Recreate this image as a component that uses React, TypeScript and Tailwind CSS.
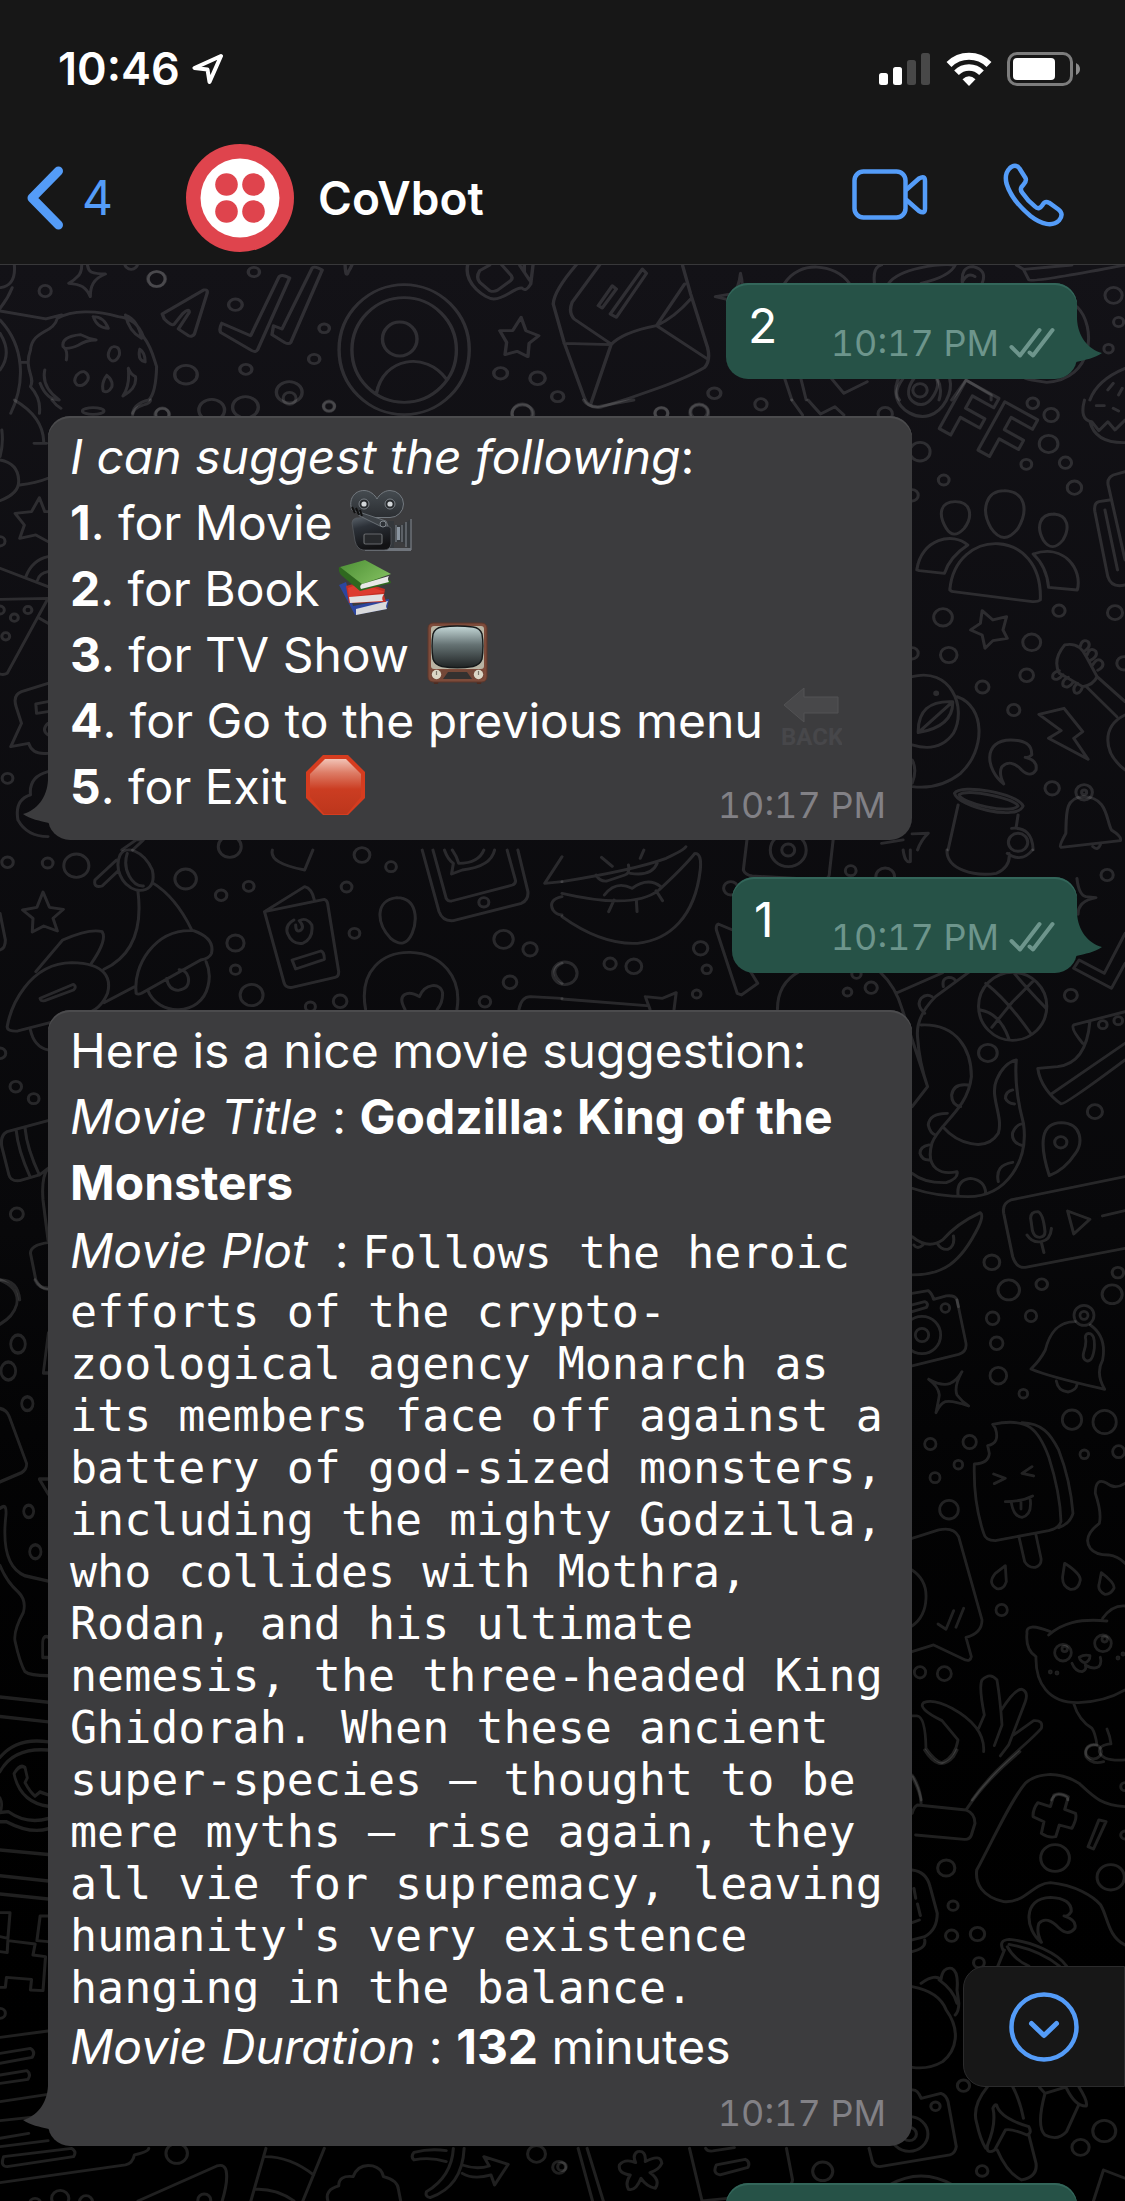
import type { ReactNode } from "react";

type Tile = { at: string; lines: string; dots: string };

/* Chat wallpaper: each tile is a patch of line-art doodles plus "x y r" bubbles. */
const TILES: Tile[] = [
  {
    at: "scale(.3584 .3333)",
    lines:
      "M40 795 q5 60 -38 68 M0 925 q22 -30 34 -62 M0 933 L128 957 L172 945 M228 795 q0 25 -12 35 q-10 12 -24 20 q25 2 38 10 q14 10 22 30 q0 -25 8 -40 q10 -18 34 -28 q-25 0 -40 -6 q-8 -6 -10 -21 M160 955 C200 930 270 930 330 950 C370 955 390 980 400 1010 C425 1045 430 1080 437 1100 Q435 1180 415 1200 Q375 1210 370 1240 M160 955 C150 1000 90 990 85 1050 C65 1110 100 1130 85 1160 Q115 1195 110 1240 M260 950 q30 0 42 35 q-30 0 -42 -35 M350 945 q35 15 45 70 q-35 -20 -45 -70 M185 1080 Q190 1050 176 1040 Q170 1010 225 1004 Q245 1015 268 1020 Q240 1020 220 1035 Q200 1045 185 1045 M318 1040 q18 0 15 25 q-8 20 -20 18 q-14 -8 -10 -25 q5 -18 15 -18 M390 1048 q15 10 15 38 q-22 -5 -15 -38 M235 1115 q15 8 10 25 q-12 22 -30 15 q-12 -10 -2 -28 q10 -14 22 -12 M298 1126 q18 15 14 35 q-10 20 -24 12 q-6 -25 10 -47 M358 1105 q8 20 20 25 q5 35 -35 58 q20 -30 15 -83 M125 1110 Q115 1160 165 1200 Q130 1200 112 1150 M0 960 C70 1040 70 1150 30 1240 M0 1000 q35 60 0 110 M55 1087 h22",
    dots: "126 873 17;366 790 18;437 837 23",
  },
  {
    at: "translate(100 264) scale(.4018 .3333)",
    lines:
      "M155 150 L258 78 Q270 75 266 90 L235 210 Q230 220 220 215 L195 195 L222 145 Q222 130 205 150 L185 180 Q178 188 160 165 Z M303 178 L375 215 L445 40 Q450 28 472 42 L392 258 Q388 266 378 260 L300 205 Q296 195 303 178 M432 185 L453 195 L528 12 Q535 5 553 18 L475 235 Q470 242 460 236 L428 212 Z M595 257 a162 195 0 1 0 324 0 a162 195 0 1 0 -324 0 M627 258 a130 157 0 1 0 260 0 a130 157 0 1 0 -260 0 M703 225 a43 51 0 1 0 86 0 a43 51 0 1 0 -86 0 M688 388 C705 280 810 260 862 345 M610 5 q2 40 8 18 q5 -8 10 -23 M915 3 C905 60 960 105 980 105 C1010 105 1030 70 1050 72 Q1060 85 1072 60 L1078 0 M970 3 L945 20 Q935 40 945 55 L970 80 Q980 85 990 78 L1022 50 Q1030 40 1020 30 L1000 3 M1045 5 L1070 50 M1056 3 V25 M1048 160 L1060 200 L1092 215 L1068 238 L1065 278 L1038 262 L1008 272 L1012 235 L995 200 L1027 200 Z M1185 3 Q1130 80 1128 120 L1155 235 L1205 400 Q1215 435 1245 430 C1330 400 1450 350 1505 310 Q1520 290 1512 250 L1470 90 L1450 5 M1155 238 L1272 242 L1220 425 M1272 242 Q1300 205 1385 185 L1512 285 M1385 185 L1455 60 M1470 105 Q1430 160 1385 185 M1245 0 L1175 115 Q1165 145 1180 165 L1272 240 M1275 65 L1285 75 L1250 132 L1240 125 Z M1350 15 L1360 28 L1285 160 L1270 150 Z",
    dots: "141 45 22;383 24 14;337 122 17;214 332 28;363 316 15;558 193 13;533 285 14;471 385 32;570 427 13;278 438 32;362 430 32;155 452 18;997 328 17;1089 343 19;1139 398 15;1529 388 16;1491 444 21;1397 448 16;1052 450 27",
  },
  {
    at: "translate(562 0) scale(.3591 .3333)",
    lines:
      "M620 850 C660 780 760 790 800 850 M870 850 Q865 800 890 795 M910 850 C940 805 1050 790 1095 795 Q1080 830 1000 850 M1115 850 q-5 -50 30 -50 q40 10 25 50 M1115 845 q15 -30 35 -15 M1265 795 L1285 808 L1300 840 Q1310 848 1568 795 M1285 808 L1420 795 M497 820 q-5 50 -25 62 l-45 8 l38 10 M497 820 q5 20 5 35 M1434 920 C1490 980 1480 1140 1350 1147 Q1300 1140 1290 1135 M620 1135 L640 1200 M665 1135 L680 1200 M750 1135 L785 1180 L850 1145 M950 1135 Q920 1180 940 1200 M1045 1135 q15 30 5 65 M1085 1200 L1125 1140 L1195 1185 V1200 M1568 1105 Q1490 1140 1470 1200 M1520 1170 l15 -20 M1550 1185 l10 -20",
    dots: "1536 886 24;1550 966 14;1522 1046 13;997 1171 20",
  },
  {
    at: "translate(0 400) scale(.3584 .3333)",
    lines:
      "M40 0 Q120 50 122 125 M95 130 H130 M0 180 Q50 190 52 240 Q55 280 0 302 M55 255 Q100 250 134 235 M5 90 Q10 130 0 170 M134 335 L125 335 L110 293 L88 335 L42 340 L68 375 L55 415 L100 405 L134 425 M72 530 Q90 480 134 470 M105 540 q5 -20 29 -25 M0 505 L134 560 M0 598 L134 595 L20 820 Q10 826 0 822 M110 655 l24 15 M134 850 L60 875 Q35 885 45 920 L60 970 L30 1040 L80 1030 Q90 1065 134 1060 M134 905 L100 912 L102 940 L134 935 M134 970 q-20 20 0 35 M134 1115 Q80 1130 85 1185 Q40 1200 50 1260 Q75 1310 134 1310 M145 0 q10 15 25 25 M370 45 Q370 25 400 15 Q420 10 420 0 M230 33 a30 10 0 1 0 60 0 a30 10 0 1 0 -60 0 M340 1350 L380 1320 L400 1320 L370 1350",
    dots: "0 424 14;0 630 12;78 630 11;40 653 11;16 709 11;21 1135 15;808 -5 18;918 19 16;453 42 18;1457 40 28",
  },
  {
    at: "translate(562 400) scale(.3591 .3333)",
    lines:
      "M60 0 Q70 20 100 20 L200 0 M640 0 L670 45 M685 0 L720 42 L760 20 L785 45 M1095 305 C1140 305 1145 350 1120 385 Q1090 420 1070 385 C1045 340 1055 305 1095 305 M1233 272 C1290 275 1300 330 1270 385 Q1230 440 1195 385 C1165 330 1180 272 1233 272 M1370 342 C1410 345 1415 385 1395 420 Q1365 460 1340 420 C1320 380 1330 342 1370 342 M1080 570 C1095 380 1340 380 1332 600 Q1325 606 1310 605 L1090 575 Q1080 575 1080 565 M988 510 C1000 415 1090 395 1130 435 Q1080 470 1065 520 L995 512 Z M1312 462 C1400 430 1450 510 1435 570 L1355 562 Q1350 500 1312 462 M1455 0 Q1440 60 1475 65 L1495 92 L1520 65 L1540 90 L1568 60 M1470 65 Q1485 130 1568 128 M1488 17 h22 M1535 25 l15 8 M1568 215 L1535 225 Q1515 235 1522 260 L1568 480 M1525 300 L1495 305 Q1480 310 1484 335 L1520 530 Q1530 565 1568 555 M1512 330 L1547 510 M1170 632 L1200 660 L1238 650 L1228 690 L1240 715 L1200 722 L1178 745 L1170 705 L1138 690 L1165 670 Z M1400 735 Q1440 725 1460 770 L1490 830 Q1480 855 1450 860 L1385 820 Q1365 780 1400 735 M1490 830 L1568 905 M1460 860 L1545 950 M1568 945 Q1520 970 1520 1020 Q1520 1070 1568 1110 M1443 740 q5 -25 22 -15 q10 15 -12 30 M1462 765 q8 -25 24 -12 q8 15 -14 28 M1478 795 q12 -25 26 -10 q8 15 -12 26 M1385 812 q-22 5 -18 22 q12 12 28 -10 M1410 832 q-20 10 -14 26 q14 10 28 -12 M1436 850 q-16 12 -8 28 q14 8 22 -18 M1328 943 L1398 925 L1450 995 L1425 1015 L1465 1078 L1355 1015 L1390 992 Z M975 830 C1080 800 1130 920 1090 1000 Q1050 1060 975 1035 M1100 890 C1180 920 1180 1050 1110 1120 Q1050 1170 975 1160 M992 998 Q990 900 1088 905 Q1090 980 992 998 L1085 908 M975 1080 q15 30 0 70 M1230 1152 C1180 1110 1170 1020 1250 1020 Q1310 1020 1308 1065 Q1300 1075 1290 1072 Q1325 1080 1320 1110 Q1305 1135 1280 1110 Q1250 1075 1225 1100 Q1215 1120 1230 1152 M1093 1180 C1110 1150 1270 1180 1284 1218 C1270 1265 1100 1220 1093 1180 M1106 1184 C1130 1165 1260 1195 1270 1218 C1250 1245 1110 1210 1106 1184 M1103 1215 L1075 1350 M1270 1245 L1265 1280 M1252 1285 Q1310 1280 1312 1350 M1388 1340 Q1385 1335 1403 1300 C1405 1240 1400 1195 1450 1190 C1520 1190 1515 1260 1530 1290 Q1560 1310 1555 1322 L1390 1342 M1478 1340 q15 15 22 -8 M890 1330 L950 1320 M975 1302 L1020 1300 Q1000 1320 990 1350",
    dots: "277 40 18;382 38 26;554 13 17;900 42 20;997 155 28;1293 193 15;1355 132 26;1402 188 17;1362 45 20;1311 10 16;1063 240 15;975 286 17;1427 263 20;1061 652 26;1384 632 17;1540 638 21;1308 727 25;1077 765 23;975 760 17;1294 826 19;1171 861 18;1258 930 17;1365 1165 20;1565 790 20;1270 1327 27;1454 1177 23;1454 1177 7;1042 880 4",
  },
  {
    at: "translate(0 850) scale(.3584 .3333)",
    lines:
      "M120 126 L138 172 L177 178 L148 205 L160 243 L122 228 L90 246 L92 205 L63 180 L103 172 Z M335 15 C350 -15 400 0 425 60 C435 110 410 125 380 120 C335 105 320 50 335 15 M355 10 C340 60 370 110 400 108 M325 30 L265 90 Q260 115 285 108 L330 62 M385 125 Q405 300 290 358 M425 98 Q490 140 535 240 M380 430 C370 350 430 235 540 242 Q600 265 590 310 Q585 325 560 330 L395 430 Q385 435 380 430 M412 420 C440 500 560 500 580 410 Q590 370 575 335 M465 385 q5 35 32 36 q35 -5 28 -40 q-5 -20 -25 -22 M100 365 L175 270 Q250 235 285 245 Q300 270 255 340 M20 530 C30 470 80 340 200 338 C300 340 310 390 300 430 Q280 480 240 490 L50 543 Q20 545 20 530 M112 445 L205 403 Q215 410 205 420 L125 452 Q112 455 112 445 M290 458 L375 410 M85 540 Q95 590 134 600 M738 185 L850 110 Q870 115 877 150 M738 185 L905 148 Q912 150 914 160 L945 365 Q945 380 935 382 L815 412 Q798 415 793 400 Z M820 210 Q795 225 802 250 Q815 285 845 280 Q875 265 870 225 Q855 200 835 212 Q850 230 840 240 Q825 250 825 225 M815 330 L895 303 Q905 305 905 328 L825 357 Z M760 0 Q750 40 850 60 L873 0 M1108 143 C1165 145 1165 210 1150 250 Q1130 300 1090 265 C1050 220 1045 150 1108 143 M1020 478 C1000 360 1070 305 1145 307 C1230 310 1290 380 1275 478 M1130 478 C1105 430 1140 420 1170 440 C1185 400 1230 395 1235 430 Q1235 460 1220 478 M1178 0 L1225 185 Q1235 215 1265 212 L1455 160 Q1475 150 1473 125 L1445 0 M1208 0 L1245 145 Q1250 155 1260 153 L1430 105 Q1440 100 1438 90 L1415 0 M1240 0 Q1250 30 1265 40 L1260 72 L1290 60 Q1370 50 1380 0 M1262 0 Q1275 20 1280 40 Q1335 40 1350 0 M1568 20 L1520 100 L1568 95 M1568 140 q-40 10 -25 40 q10 15 25 15 M1568 340 q-40 20 0 60 M1448 478 Q1455 440 1480 440 L1568 445 M134 812 L20 845 Q0 855 5 890 L25 975 Q30 995 55 992 L110 975 L134 955 M45 840 q5 60 38 138 M70 835 q5 60 40 140 M134 955 Q115 980 120 1050 L134 1170 M134 1178 Q85 1185 85 1210 L100 1290 Q115 1320 134 1318 M0 1290 Q50 1290 55 1350 M0 190 L15 270 Q15 295 0 300",
    dots: "21 37 16;133 39 15;213 47 35;518 87 30;617 136 16;694 109 15;641 -10 32;1010 15 22;1091 50 15;967 111 15;989 250 15;657 279 24;657 359 14;702 435 32;949 454 19;866 470 14;1405 268 27;1479 298 20;1423 397 19;1353 455 16;44 710 16;94 746 15;47 1092 18;0 610 16;1350 157 14",
  },
  {
    at: "translate(562 850) scale(.3591 .3333)",
    lines:
      "M0 95 Q200 60 290 25 Q340 0 345 -10 M0 130 Q200 180 270 120 Q340 50 370 10 Q390 10 385 60 C370 200 300 270 210 280 Q110 285 0 200 M95 75 Q105 95 125 93 L175 75 Q190 70 185 45 M190 70 q60 10 75 -30 M110 22 l30 27 M228 0 l-10 25 M118 135 Q150 90 195 115 Q240 80 275 110 M145 150 l-15 35 M207 150 l2 35 M262 122 l18 30 M515 -30 L505 60 Q510 75 530 78 L655 85 M755 -30 L745 65 Q745 85 735 85 M950 0 q5 40 20 35 l0 -35 M1072 0 C1070 60 1150 80 1210 70 Q1250 50 1245 10 M1240 10 Q1280 40 1310 0 M1434 85 q5 50 25 55 l28 3 q-50 10 -50 50 M475 240 L435 222 Q428 225 430 240 L488 430 L500 435 L545 400 L525 365 M232 440 L280 445 L318 428 L312 478 M0 447 L235 467 M232 440 L245 478 M600 478 Q600 400 660 365 M885 365 Q930 410 948 480 M930 430 L1060 368 M1135 365 L1040 440 Q985 500 990 560 Q995 640 1018 710 L975 770 M1000 525 C1100 520 1140 600 1140 680 C1130 780 1050 820 1030 880 C1010 960 1060 975 1100 965 Q1105 985 1070 998 Q1010 1000 975 970 M948 480 L1018 710 M1060 830 C1100 880 1180 910 1215 850 C1230 800 1190 740 1210 690 Q1230 640 1265 630 C1260 700 1270 760 1285 820 C1300 930 1240 1040 1130 1040 Q1040 1040 975 1015 M1130 705 q-40 -5 -45 30 q0 30 25 35 M1073 790 q-50 0 -53 35 q5 25 20 30 M1022 885 q-25 5 -25 25 q5 20 25 20 M1103 1035 q-5 -45 35 -50 q40 5 42 45 M1215 995 q-10 -50 40 -58 M1285 888 q-35 -10 -30 -40 q10 -25 28 -27 M1255 720 q-20 5 -20 25 q5 15 25 17 M1010 490 q-25 -25 -10 -45 q15 -15 30 -5 M1062 410 q-5 -25 15 -28 q15 0 20 12 M1160 469 a95 102 0 1 0 190 0 a95 102 0 1 0 -190 0 M1180 400 Q1240 450 1305 550 M1258 368 Q1290 410 1348 475 M1197 532 L1255 455 L1315 390 M1165 480 Q1220 490 1245 568 M1568 250 L1510 370 L1440 330 L1425 355 L1530 415 L1568 340 M1568 485 L1425 525 Q1415 535 1450 580 M1470 515 Q1460 640 1380 650 L1325 655 C1330 700 1360 740 1390 762 Q1400 765 1568 630 M1365 730 L1568 580 M1357 977 Q1310 820 1390 818 C1450 820 1450 880 1430 910 Q1400 960 1357 977 M1568 980 L1250 1050 Q1225 1060 1230 1090 L1255 1220 Q1265 1255 1290 1252 L1568 1195 M1305 1105 q0 -20 20 -20 q15 5 20 60 q0 15 -15 17 q-15 0 -20 -20 Z M1295 1155 Q1310 1180 1335 1175 Q1360 1170 1363 1135 M1335 1178 L1342 1208 M1408 1083 L1470 1108 L1425 1152 Z M1505 1098 L1568 1082 M975 1160 Q1020 1200 1060 1170 Q1100 1120 1165 1088 Q1175 1095 1160 1130 C1110 1240 1060 1275 975 1275 M1045 1180 q10 20 30 18 q20 -10 15 -40 M980 1185 q10 15 25 0 M975 1330 L1020 1322 Q1030 1330 1035 1348 L1070 1338 Q1095 1335 1100 1350 L1104 1370 M975 1365 L1010 1355 Q1022 1360 1015 1372 L975 1385",
    dots: "630 0 50;630 0 18;804 62 15;470 115 20;900 80 26;1518 75 17;386 295 20;8 370 34;134 341 17;200 349 22;403 358 13;375 432 12;820 372 13;795 426 12;861 413 17;1417 436 18;1186 609 26;1484 785 21;1197 1237 22;1244 1320 30;1336 1303 16;1548 1268 16;1532 1333 28;1506 524 12;1549 512 12;1389 877 17",
  },
  {
    at: "translate(862 1300) scale(.3333)",
    lines:
      "M285 0 L312 130 Q315 155 290 163 L150 198 M200 238 Q240 260 265 250 Q285 240 300 215 Q275 260 285 285 Q300 305 320 318 Q270 300 250 305 Q235 310 222 338 Q230 300 232 285 Q230 260 200 238 M640 65 C580 65 560 110 550 150 Q535 180 507 207 C560 230 650 250 728 268 Q700 220 722 180 Q735 110 685 75 M583 243 q5 30 35 33 q25 -5 27 -22 M680 100 q20 0 17 45 q-5 40 -22 38 q-15 -5 -10 -25 q10 -30 5 -45 q0 -12 10 -13 M392 373 C500 350 530 390 560 470 Q595 580 597 665 Q590 685 560 692 L400 722 Q370 722 365 700 C345 640 335 560 337 492 Q380 490 382 460 L377 437 Q415 430 400 385 Z M480 368 C540 370 565 400 590 450 Q625 540 633 640 Q625 670 590 683 M395 522 l35 13 l-33 16 M510 500 l-30 20 l35 8 M430 605 Q480 605 512 588 M448 608 Q455 650 480 652 Q510 645 505 600 M477 605 v22 M472 715 L488 785 Q500 805 520 802 Q540 795 537 775 L522 705 M430 797 L433 845 Q425 870 405 866 Q375 850 400 820 Z M608 790 Q655 820 655 840 Q650 870 625 868 Q600 860 602 830 Z M718 818 Q760 850 756 865 Q745 885 728 883 Q705 870 712 850 Z M789 550 Q760 570 735 550 Q700 530 700 580 Q720 640 712 670 Q660 710 685 745 Q700 765 740 765 Q770 770 789 790 M150 715 L230 690 Q275 680 290 710 L360 960 Q360 1000 312 1012 L328 1070 Q325 1085 310 1080 L215 1035 L150 1055 M150 810 Q195 840 192 895 Q190 950 150 978 M228 972 L252 988 L275 932 M282 982 L305 925 M560 1005 C600 970 650 955 735 963 M565 995 Q490 965 495 1000 Q490 1050 522 1070 C520 1150 560 1210 650 1208 Q730 1205 789 1170 M722 955 Q750 915 789 918 M652 1072 q15 -10 32 -5 q0 15 -15 22 q-15 -5 -17 -17 M630 1090 q10 25 30 25 q15 -5 10 -20 q25 15 40 5 q10 -10 5 -28 M635 1210 Q650 1260 690 1285 Q700 1300 705 1335 Q665 1335 672 1370 Q690 1395 725 1385 M735 1287 Q745 1310 747 1332 Q710 1335 712 1355 Q720 1385 789 1380 M365 1355 Q370 1280 270 1225 Q215 1195 185 1208 Q165 1225 240 1262 L288 1320 Q280 1370 240 1388 Q220 1385 192 1345 Q190 1250 165 1248 L150 1248 M350 1285 L367 1245 Q350 1160 360 1140 Q385 1115 405 1140 Q415 1200 420 1275 L397 1337 M418 1230 Q460 1165 480 1168 Q500 1175 490 1205 L440 1335 L415 1368 M455 1305 L515 1262 Q545 1260 538 1285 C500 1330 400 1400 330 1500 M150 1425 Q170 1450 178 1500 M568 1500 q10 -20 30 -15 q20 5 20 15",
    dots: "180 105 56;180 105 20;250 24 13;392 55 19;507 48 17;404 130 19;409 227 25;484 281 13;205 432 17;323 426 20;289 494 13;219 533 15;630 359 29;728 366 35;667 463 13;770 455 18;261 629 28;419 930 17;174 1117 17;247 1121 21;666 46 30;666 46 12;603 1058 25;608 1047 8;723 1030 25;728 1018 8;565 1116 3;585 1119 3;768 1074 3;783 1062 3",
  },
  {
    at: "translate(562 1750) scale(.3591 .3333)",
    lines:
      "M1275 5 Q1180 90 1125 180 M1010 0 Q1050 70 1090 20 L1100 0 M990 165 L1125 180 Q1150 190 1150 220 L1140 255 Q1135 270 1120 268 L985 255 M975 190 q5 -20 15 -25 M975 80 Q1000 130 1000 160 M1568 170 C1500 165 1480 140 1440 100 C1380 60 1320 70 1290 100 C1250 150 1200 270 1155 360 C1150 400 1170 440 1230 455 C1290 460 1310 400 1360 398 C1430 405 1480 440 1500 465 C1520 500 1520 560 1568 585 M1370 135 Q1385 125 1410 140 L1400 178 L1430 190 Q1435 205 1420 235 L1385 225 L1375 260 Q1355 265 1335 250 L1342 215 L1312 200 Q1310 180 1325 158 L1360 170 Z M1495 210 L1515 215 L1480 297 L1465 290 Z M1335 577 C1290 540 1280 445 1360 442 Q1420 445 1418 485 Q1410 500 1398 498 Q1435 510 1428 535 Q1410 560 1385 535 Q1350 495 1328 520 Q1320 545 1335 577 M1213 650 L1232 600 M1228 600 Q1215 570 1245 568 C1310 575 1380 610 1405 648 M1240 590 Q1260 630 1300 648 M1245 583 Q1330 600 1385 648 M975 360 Q1015 365 1025 410 L1045 490 Q1045 540 1010 560 L975 570 M980 415 l5 30 M990 462 l8 35 M975 518 l20 -8 M1010 570 q5 25 -35 35 M1000 700 Q1040 670 1055 690 Q1060 650 1085 655 Q1105 665 1100 720 L1105 760 Q1105 785 1095 795 M975 710 Q1050 725 1070 780 C1110 840 1100 900 1060 935 Q1020 960 975 952 M1050 690 Q1090 720 1100 760 M975 1020 Q990 1018 1000 1045 L1055 1030 Q1070 1035 1075 1055 L1098 1190 Q1095 1210 1080 1215 L885 1250 Q865 1250 862 1225 L855 1195 M1185 1010 Q1140 1070 1155 1120 Q1165 1170 1180 1195 M1255 1010 Q1275 1050 1285 1105 M1210 1065 Q1220 1105 1300 1130 Q1310 1150 1295 1155 Q1250 1135 1235 1140 L1205 1200 Q1180 1215 1185 1185 Q1210 1120 1200 1075 Q1205 1062 1210 1065 M1212 1200 Q1240 1270 1280 1290 Q1325 1280 1320 1240 L1300 1155 M1330 1012 L1345 1030 L1400 1012 M1345 1030 Q1320 1130 1345 1155 Q1380 1175 1405 1145 L1440 1062 M1405 1015 Q1430 1070 1460 1068 Q1465 1055 1440 1012 M910 1306 Q1000 1250 1090 1306 M1480 1353 L1508 1260 L1568 1285 M45 1195 L85 1353 M70 1195 L115 1353 M210 1205 Q235 1200 232 1235 Q275 1210 278 1240 Q270 1260 245 1268 Q275 1290 260 1315 Q235 1310 220 1285 Q205 1325 185 1318 Q175 1300 190 1275 Q155 1270 160 1245 Q175 1225 205 1238 Q195 1215 210 1205 M355 1195 L390 1353 L460 1345 M625 1195 L642 1290 Q640 1305 630 1306 M400 1195 q5 10 20 8 l60 -10 M430 1245 L510 1228 Q525 1235 518 1252 L440 1275 Q418 1270 430 1245",
    dots: "1373 324 40;1528 382 38;1568 110 12;1568 255 12;1070 354 24;1089 467 14;1085 557 17;1157 552 20;1161 638 15;1118 1007 17;1444 1192 24;1510 1143 32;1170 1263 16;726 1264 28;1040 1069 13;967 1152 52;967 1152 20;0 1250 12;1480 5 22",
  },
  {
    at: "translate(0 1900) scale(.3584 .3333)",
    lines:
      "M0 38 H28 L22 115 L0 110 M134 48 H112 L103 122 L134 125 M22 122 L98 132 L92 165 L127 170 L120 272 L85 270 L88 238 L18 232 L15 262 L0 262 M22 122 L20 158 L0 155 M0 412 L134 393 M0 460 L85 445 Q100 455 90 472 L0 490 M0 525 L75 512 Q88 522 78 538 L0 550 M0 605 L134 583 M0 662 L105 650 M0 715 L80 700 M0 740 L134 722 M10 770 L200 745 Q215 755 205 770 L20 800 Q0 800 10 770 M415 745 Q415 755 375 765 Q370 790 350 795 L0 848 M385 903 L605 798 Q630 790 632 820 Q635 850 620 903 M742 745 L700 903 M905 745 L845 903 M740 770 Q810 770 875 825 M712 868 Q770 865 820 903 M915 903 Q905 870 945 858 Q945 825 985 830 Q1000 790 1040 798 Q1065 805 1070 830 Q1110 840 1112 870 L1118 903 M1245 785 Q1200 770 1155 780 Q1145 770 1155 757 Q1200 745 1245 752 M1265 745 Q1260 830 1190 875 Q1185 890 1200 893 Q1290 860 1295 745 M1290 795 Q1330 810 1365 798 L1350 770 L1418 793 L1380 855 L1370 825 Q1320 840 1290 820",
    dots: "0 340 15;493 760 30;168 895 24;240 905 18;570 900 18;98 910 15;1497 762 25;1560 802 18",
  },
  {
    at: "translate(0 1280) scale(.3333 .408)",
    lines:
      "M0 0 Q60 20 50 60 Q40 90 0 108 M105 0 q10 20 40 20 M145 130 L130 228 H145 M0 315 Q20 318 28 335 L80 450 Q80 465 65 472 L0 495 M145 488 H118 L145 525 M0 560 Q20 545 18 575 Q0 700 75 725 L145 738 M0 700 Q20 740 55 765 Q80 785 70 815 Q40 860 45 885 Q60 940 75 960 Q90 970 145 970 M145 875 Q128 870 128 890 V925 H145 M0 1022 L145 1035 M0 1070 L145 1083 M0 1170 Q50 1120 145 1132 M0 1205 Q40 1145 145 1152 M0 1270 q10 15 0 35 L25 1303 Q80 1335 145 1320 M0 1328 H20 Q90 1358 145 1345 M145 1290 Q60 1280 42 1210 Q60 1185 75 1195 L82 1220 L75 1232 Q90 1255 105 1265 L120 1255 L145 1262 M0 1397 L145 1408 M0 1460 L145 1473 M0 1505 L145 1517",
    dots: "54 157 22;25 223 22;82 303 17;86 567 15;106 666 17",
  },
];

function Wallpaper() {
  return (
    <svg
      aria-hidden="true"
      className="absolute inset-0 h-full w-full"
      viewBox="0 265 1125 1936"
      preserveAspectRatio="xMidYMin slice"
      fill="none"
      stroke="#ffffff"
      strokeOpacity="0.125"
      strokeWidth="8.5"
      strokeLinecap="round"
      strokeLinejoin="round"
    >
      {TILES.map((tile) => (
        <g key={tile.at} transform={tile.at}>
          <path d={tile.lines} />
          {tile.dots.split(";").map((dot) => {
            const [cx, cy, r] = dot.split(" ");
            return <circle key={dot} cx={cx} cy={cy} r={r} />;
          })}
        </g>
      ))}
      <text
        transform="translate(884 398) rotate(29)"
        className="font-['Inter'] text-[76px] font-extrabold"
        strokeWidth="3"
      >
        OFF
      </text>
    </svg>
  );
}

function LocationArrow() {
  return (
    <svg aria-hidden="true" viewBox="0 0 32 32" className="size-8" fill="none" stroke="#fff" strokeWidth="4" strokeLinejoin="round">
      <path d="M29 3 L2.5 15 L15.5 16.5 L17.5 29 Z" />
    </svg>
  );
}

function Signal() {
  return (
    <svg aria-label="Signal strength" viewBox="0 0 52 34" className="h-[34px] w-[52px]">
      <rect x="0" y="21" width="9" height="12" rx="2.5" fill="#fff" />
      <rect x="14" y="15" width="9" height="18" rx="2.5" fill="#fff" />
      <rect x="28" y="8" width="9" height="25" rx="2.5" fill="#484848" />
      <rect x="42" y="1" width="9" height="32" rx="2.5" fill="#484848" />
    </svg>
  );
}

function Wifi() {
  return (
    <svg aria-label="Wi-Fi" viewBox="0 0 46 34" className="h-[34px] w-[46px]">
      <path fill="none" stroke="#fff" strokeWidth="7" d="M3 12.5 A28.5 28.5 0 0 1 43 12.5" />
      <path fill="none" stroke="#fff" strokeWidth="6.5" d="M10.5 20.8 A17.5 17.5 0 0 1 35.5 20.8" />
      <path fill="#fff" d="M16.5 27.2 Q23 21.5 29.5 27.2 L23 34 Z" />
    </svg>
  );
}

function Battery() {
  return (
    <svg aria-label="Battery" viewBox="0 0 74 34" className="h-[34px] w-[74px]">
      <rect x="1.5" y="1.5" width="63" height="31" rx="8.5" fill="none" stroke="#7d7d7d" strokeWidth="3" />
      <rect x="6" y="6" width="42" height="22" rx="4" fill="#fff" />
      <path d="M69 11 q4 2 4 6 q0 4 -4 6 Z" fill="#8b8b8b" />
    </svg>
  );
}

function Avatar() {
  return (
    <svg role="img" aria-label="CoVbot avatar" viewBox="0 0 108 108" className="size-[108px]">
      <circle cx="54" cy="54" r="54" fill="#df444d" />
      <circle cx="54" cy="54" r="39.5" fill="#fff" />
      {[40.5, 67.5].map((cx) =>
        [40.5, 67.5].map((cy) => <circle key={`${cx}-${cy}`} cx={cx} cy={cy} r="11.3" fill="#df444d" />),
      )}
    </svg>
  );
}

function VideoIcon() {
  return (
    <svg aria-hidden="true" viewBox="0 0 78 54" className="h-[54px] w-[78px]" fill="none" stroke="currentColor" strokeWidth="4.5" strokeLinejoin="round">
      <rect x="3.5" y="3.5" width="51" height="46" rx="9" />
      <path d="M55 22 L68 10.5 Q74 7 74 13 V40.5 Q74 46.5 68 43 L55 31.5" />
    </svg>
  );
}

function PhoneIcon() {
  return (
    <svg aria-hidden="true" viewBox="0 0 62 64" className="h-16 w-[62px]" fill="none" stroke="currentColor" strokeWidth="4.5" strokeLinejoin="round">
      <path d="M6.5 5.5 C10 1.5 14.5 2 16.5 5.5 L22.5 15 C24.5 19 20.5 21 18.5 24 C17.2 26.5 17.7 28 19.5 30 C23.5 36 27.5 40 32 43.5 C35 46.5 37.5 45 39.5 42 C41.5 38.5 43.5 38.5 46 39.7 L55.5 46.5 C59.5 49.5 59.5 53.5 56 57.5 C49.5 64 38.5 61.5 27.5 53 C15.5 43 6.5 30.5 3.5 20.5 C2 14 3 9 6.5 5.5 Z" />
    </svg>
  );
}

const emojiBox = "ml-1 inline-block h-[62px] w-[62px] align-[-12px]";

function CameraEmoji() {
  return (
    <svg role="img" aria-label="Movie camera" viewBox="0 0 62 62" className={emojiBox}>
      <defs>
        <linearGradient id="reel" x1="0" y1="0" x2="0" y2="1">
          <stop offset="0" stopColor="#454b50" />
          <stop offset="1" stopColor="#2b2e32" />
        </linearGradient>
        <linearGradient id="body" x1="0" y1="0" x2="0.3" y2="1">
          <stop offset="0" stopColor="#5b636b" />
          <stop offset="0.35" stopColor="#2c3138" />
          <stop offset="1" stopColor="#121214" />
        </linearGradient>
      </defs>
      <path d="M38 31 H44 V35 H52 L61 29 V60 L52 52 H44 V58 H38 Z" fill="#34383c" />
      <path d="M61 29 V60 M56 32 V57 M52 35 V52 M46 35 V52" stroke="#848a92" strokeWidth="1" />
      <path d="M47 37 H50 V50 H47 Z" fill="#8a95a0" />
      <path d="M36 58 H61 V61 H15 V59 Z" fill="#70757c" />
      <path d="M2 33 Q2 29 6 28 L24 27 L41 38 V54 Q40 60 34 60 H13 Q7 59 5 51 Z" fill="url(#body)" stroke="#55595e" strokeWidth="0.8" />
      <path d="M14 0.5 C20 0.5 25 5 27 9 C29 5 34 0.5 40 0.5 A13.5 13.5 0 0 1 40 27.5 H22 L2 20 C-2 10 4 0.5 14 0.5 Z" fill="url(#reel)" stroke="#73797f" strokeWidth="1" />
      <g fill="#26292c" stroke="#7b8187">
        <circle cx="14" cy="14" r="5" />
        <circle cx="40" cy="14" r="5" />
      </g>
      <circle cx="14" cy="14" r="2.6" fill="#d3d7da" />
      <circle cx="40" cy="14" r="2.6" fill="#d3d7da" />
      <path d="M9 22 L36 31 L38 36 L30 36 L8 25 Z" fill="#3d4247" stroke="#747a80" strokeWidth="0.8" />
      <path d="M2 17 l3 6 M6 18 l3 7 M10 20 l2 6" stroke="#111" strokeWidth="2" />
      <circle cx="33" cy="34" r="3" fill="#2d3136" stroke="#82888e" />
      <rect x="14" y="44" width="18" height="10" rx="1.5" fill="#27292c" stroke="#67696c" strokeWidth="1.2" />
    </svg>
  );
}

function BooksEmoji() {
  return (
    <svg role="img" aria-label="Books" viewBox="0 0 62 62" className={emojiBox}>
      <defs>
        <linearGradient id="green" x1="0" y1="0" x2="1" y2="0.6">
          <stop offset="0" stopColor="#4c8f35" />
          <stop offset="1" stopColor="#7ebb5c" />
        </linearGradient>
      </defs>
      <path d="M2 29 L9 26 L16 50 L52 43 L50 53 L18 59 Z" fill="#2c469f" />
      <path d="M19 53 L51 45 Q48 50 50 53 L19 59 Z" fill="#d9dadc" />
      <path d="M9 30 L24 26 L48 33 L47 39 L49 46 L12 47 Z" fill="#c62f24" />
      <path d="M11 32 L24 27 L48 36 L12 41 Z" fill="#dd3c30" />
      <path d="M12 41 L47 38 Q44 42 46 45 L13 47 Z" fill="#e1e1e1" />
      <path d="M2 11 Q1 15 4 19 L23 35 L54 27 L53 24 Z" fill="#2f681f" />
      <path d="M3 11 L28 4 L54 18 L25 28 Z" fill="url(#green)" />
      <path d="M25 28 L52 20 Q50 23 52 26 L24 33 Q22 30 25 28 Z" fill="#e8e8e8" />
    </svg>
  );
}

function TvEmoji() {
  return (
    <svg role="img" aria-label="Television" viewBox="0 0 62 62" className={emojiBox}>
      <defs>
        <linearGradient id="screen" x1="0" y1="0" x2="0" y2="1">
          <stop offset="0" stopColor="#c6d9d9" />
          <stop offset="0.45" stopColor="#657273" />
          <stop offset="1" stopColor="#1f2323" />
        </linearGradient>
      </defs>
      <path d="M6 57 h6 l-1 5 h-4 Z M49 57 h6 l-1 5 h-4 Z" fill="#4b2b21" />
      <rect x="1" y="1" width="59" height="59" rx="5" fill="#7d4b3a" stroke="#5d372b" />
      <rect x="4" y="4" width="53" height="43" rx="3" fill="#b9b4a3" />
      <path d="M6 12 Q8 6 15 5 Q30 3 46 5 Q53 6 55 12 Q57 24 55 37 Q53 43 46 44.5 Q30 47 15 44.5 Q8 43 6 37 Q4 24 6 12 Z" fill="url(#screen)" stroke="#15191a" strokeWidth="1.4" />
      <rect x="4" y="48" width="53" height="9" rx="2" fill="#744737" />
      <path d="M16 57 L21 50 H40 L45 57 Z" fill="#343130" />
      <circle cx="9.5" cy="52.5" r="4.7" fill="#dcd6c6" />
      <circle cx="51.5" cy="52.5" r="4.7" fill="#dcd6c6" />
      <path d="M9.5 49 V53 M51.5 49 V53" stroke="#7c766a" strokeWidth="1.2" />
    </svg>
  );
}

function BackEmoji() {
  return (
    <svg role="img" aria-label="Back arrow" viewBox="0 0 62 62" className={emojiBox}>
      <path d="M4 17 L24 0 V9 H58 V25 H24 V34 Z" fill="#48484a" stroke="#525254" strokeWidth="1" />
      <text x="1" y="57" className="font-['Roboto'] text-[24px] font-bold" fill="#47474a">
        BACK
      </text>
    </svg>
  );
}

function StopEmoji() {
  return (
    <svg role="img" aria-label="Stop sign" viewBox="0 0 62 62" className={emojiBox}>
      <defs>
        <linearGradient id="stop" x1="0" y1="0" x2="0" y2="1">
          <stop offset="0" stopColor="#f2c3b6" />
          <stop offset="0.25" stopColor="#dd7c66" />
          <stop offset="0.55" stopColor="#cb3d22" />
          <stop offset="1" stopColor="#bd361c" />
        </linearGradient>
      </defs>
      <path d="M18 1 H43 L60 18 V44 L43 61 H18 L1 44 V18 Z" fill="#d63c1f" />
      <path d="M20 5 H41 L56 20 V43 L42 60 H19 L5 43 V20 Z" fill="url(#stop)" />
    </svg>
  );
}

function DoubleCheck() {
  return (
    <svg aria-label="Delivered" viewBox="0 0 46 32" className="h-8 w-[46px]" fill="none" stroke="currentColor" strokeWidth="4" strokeLinecap="round" strokeLinejoin="round">
      <path d="M2.5 20 L11 28.5 L30.5 3 M20.5 25.5 L24 28.5 L43.5 3" />
    </svg>
  );
}

function Sent({ width, children }: { width: string; children?: ReactNode }) {
  return (
    <div
      className={`relative mr-12 flex h-24 shrink-0 items-start justify-between self-end rounded-[22px] bg-[#265247] px-[22px] pt-2.5 shadow-[inset_0_2px_0_#33665a] ${width}`}
    >
      {children !== undefined && (
        <>
          <p className="text-[48px] leading-[66px]">{children}</p>
          <span className="mt-[22px] flex items-center gap-2.5 text-[#6d958c]">
            <time className="text-[36px] leading-[56px] tabular-nums">10:17 PM</time>
            <DoubleCheck />
          </span>
        </>
      )}
      <svg aria-hidden="true" viewBox="0 0 27 44" className="absolute bottom-4 left-full -ml-px h-11 w-[27px]">
        <path d="M0 0 H1 C2 18 12 30 26 34 C19 39 9 41 0 43 Z" fill="#265247" />
      </svg>
    </div>
  );
}

function Received({ children }: { children: ReactNode }) {
  return (
    <div className="relative ml-12 flex w-[864px] max-w-[calc(100%-96px)] shrink-0 flex-col rounded-[22px] bg-[#3c3c3e] px-[22px] pt-2 text-[48px] leading-[66px] shadow-[inset_0_2px_0_#4b4b4d]">
      {children}
      <svg aria-hidden="true" viewBox="0 0 27 44" className="absolute right-full bottom-4 -mr-px h-11 w-[27px]">
        <path d="M27 0 H26 C25 18 15 30 1 34 C8 39 18 41 27 43 Z" fill="#3c3c3e" />
      </svg>
    </div>
  );
}

const receivedTime = "mr-1 text-[36px] leading-[66px] tabular-nums text-[#828186]";

export default function App() {
  return (
    <div className="flex h-screen flex-col overflow-hidden bg-black font-['Inter','Liberation_Sans',sans-serif] text-white">
      <header className="shrink-0 border-b border-[#38383a] bg-[#171717]">
        <div className="flex h-[132px] items-center justify-between pt-1.5 pr-11 pl-[58px]">
          <div className="flex items-center gap-3">
            <span className="text-[45px] leading-[56px] font-semibold">10:46</span>
            <LocationArrow />
          </div>
          <div className="flex items-center gap-[15px]">
            <Signal />
            <Wifi />
            <Battery />
          </div>
        </div>
        <nav className="flex h-[132px] items-center justify-between pr-[60px] pl-6">
          <div className="flex items-center">
            <button type="button" aria-label="Back, 4 unread chats" className="flex w-[162px] items-center gap-4 text-[#549cf8]">
              <svg aria-hidden="true" viewBox="0 0 42 64" className="h-16 w-[42px]" fill="none" stroke="currentColor" strokeWidth="9" strokeLinecap="round" strokeLinejoin="round">
                <path d="M34.5 5 L8 32 L34.5 59" />
              </svg>
              <span className="text-[48px] leading-[64px]">4</span>
            </button>
            <Avatar />
            <h1 className="ml-6 text-[46px] leading-[64px] font-semibold">CoVbot</h1>
          </div>
          <div className="flex items-center gap-[74px] pb-1.5 text-[#549cf8]">
            <button type="button" aria-label="Video call">
              <VideoIcon />
            </button>
            <button type="button" aria-label="Voice call">
              <PhoneIcon />
            </button>
          </div>
        </nav>
      </header>

      <main className="relative flex-1 overflow-hidden bg-linear-to-b from-[#131217] via-[#08080a] to-black">
        <Wallpaper />
        <div className="relative flex flex-col gap-[37px] pt-[18px]">
          <Sent width="w-[351px]">2</Sent>

          <Received>
            <p>
              <em>I can suggest the following</em>:
            </p>
            <p>
              <strong>1</strong>. for Movie <CameraEmoji />
            </p>
            <p>
              <strong>2</strong>. for Book <BooksEmoji />
            </p>
            <p>
              <strong>3</strong>. for TV Show <TvEmoji />
            </p>
            <p>
              <strong>4</strong>. for Go to the previous menu <BackEmoji />
            </p>
            <div className="flex items-start justify-between pb-5">
              <p>
                <strong>5</strong>. for Exit <StopEmoji />
              </p>
              <time className={`${receivedTime} -mb-5 mt-[18px]`}>10:17 PM</time>
            </div>
          </Received>

          <Sent width="w-[345px]">1</Sent>

          <Received>
            <p>Here is a nice movie suggestion:</p>
            <p>
              <em>Movie Title</em> : <strong>Godzilla: King of the Monsters</strong>
            </p>
            <p className="font-['DejaVu_Sans_Mono',monospace] text-[45px] leading-[52px]">
              <span className="font-['Inter','Liberation_Sans',sans-serif] text-[48px] leading-[70px]">
                <em>Movie Plot</em> &nbsp;:&nbsp;
              </span>
              Follows the heroic efforts of the crypto-zoological agency Monarch as its members face off against a
              battery of god-sized monsters, including the mighty Godzilla, who collides with Mothra, Rodan, and his
              ultimate nemesis, the three-headed King Ghidorah. When these ancient super-species – thought to be mere
              myths – rise again, they all vie for supremacy, leaving humanity's very existence hanging in the balance.
            </p>
            <p>
              <em>Movie Duration</em> : <strong>132</strong> minutes
            </p>
            <time className={`${receivedTime} self-end`}>10:17 PM</time>
          </Received>

          <Sent width="w-[351px]" />
        </div>

        <button
          type="button"
          aria-label="Scroll to latest message"
          className="absolute right-0 bottom-[114px] flex h-[121px] w-[162px] items-center rounded-l-[22px] border border-[#2b2b2c] bg-[#171717] pl-11 text-[#549cf8]"
        >
          <svg aria-hidden="true" viewBox="0 0 72 72" className="size-[72px]" fill="none" stroke="currentColor" strokeWidth="4.5" strokeLinecap="round" strokeLinejoin="round">
            <circle cx="36" cy="36" r="32.5" />
            <path d="M23.5 32.5 L36 44.5 L48.5 32.5" strokeWidth="5" />
          </svg>
        </button>
      </main>
    </div>
  );
}
